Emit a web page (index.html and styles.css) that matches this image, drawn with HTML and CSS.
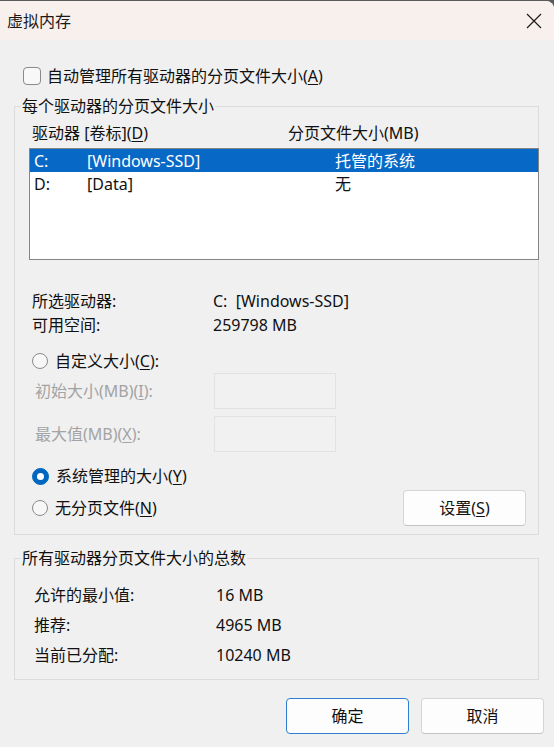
FILE: index.html
```html
<!DOCTYPE html>
<html lang="zh-CN">
<head>
<meta charset="utf-8">
<title>虚拟内存</title>
<link rel="stylesheet" href="styles.css">
</head>
<body>
<div class="window">
  <div class="titlebar">
    <span class="title">虚拟内存</span>
    <span class="close">
      <svg width="16" height="16" viewBox="0 0 16 16"><path d="M1 1 L15 15 M15 1 L1 15" stroke="#1b1b1b" stroke-width="1.2" fill="none"/></svg>
    </span>
  </div>
  <div class="content">
    <div class="check-row">
      <span class="checkbox"></span>
      <span>自动管理所有驱动器的分页文件大小(<u>A</u>)</span>
    </div>

    <fieldset class="group group-drive">
      <legend>每个驱动器的分页文件大小</legend>
      <div class="list-header">
        <span>驱动器 [卷标](<u>D</u>)</span>
        <span>分页文件大小(MB)</span>
      </div>
      <div class="listbox">
        <div class="list-row selected"><span>C:</span><span>[Windows-SSD]</span><span>托管的系统</span></div>
        <div class="list-row"><span>D:</span><span>[Data]</span><span>无</span></div>
      </div>
      <div class="info">
        <span>所选驱动器:</span><span>C:&nbsp; [Windows-SSD]</span>
        <span>可用空间:</span><span>259798 MB</span>
      </div>
      <div class="radio-row radio-custom">
        <span class="radio"></span>
        <span>自定义大小(<u>C</u>):</span>
      </div>
      <div class="field-row">
        <span class="disabled">初始大小(MB)(<u>I</u>):</span>
        <span class="input"></span>
      </div>
      <div class="field-row field-second">
        <span class="disabled">最大值(MB)(<u>X</u>):</span>
        <span class="input"></span>
      </div>
      <div class="radio-row radio-system">
        <span class="radio checked"></span>
        <span>系统管理的大小(<u>Y</u>)</span>
      </div>
      <div class="radio-row radio-none">
        <span class="radio"></span>
        <span>无分页文件(<u>N</u>)</span>
        <span class="button set-button">设置(<u>S</u>)</span>
      </div>
    </fieldset>

    <fieldset class="group group-total">
      <legend>所有驱动器分页文件大小的总数</legend>
      <div class="totals">
        <span>允许的最小值:</span><span>16 MB</span>
        <span>推荐:</span><span>4965 MB</span>
        <span>当前已分配:</span><span>10240 MB</span>
      </div>
    </fieldset>

    <div class="actions">
      <span class="button default">确定</span>
      <span class="button">取消</span>
    </div>
  </div>
</div>
</body>
</html>
```

FILE: styles.css
```css
html {
  background: #5a5a5a;
}
body {
  margin: 0;
  width: 554px;
  height: 747px;
  overflow: hidden;
  font-family: "Noto Sans", "Noto Sans CJK SC", sans-serif;
  font-size: 16px;
  color: #111;
}
u {
  text-decoration: underline;
  text-underline-offset: 2px;
  text-decoration-thickness: 1px;
}
.window {
  margin-top: 1px;
  height: 746px;
  background: #f0f0f0;
  border-top-right-radius: 8px;
  overflow: hidden;
}
.titlebar {
  height: 39px;
  background: #f7f0ed;
  display: flex;
  align-items: center;
  justify-content: space-between;
  padding: 0 12px 0 7px;
}
.title {
  line-height: 22px;
  font-size: 16px;
  color: #1a1a1a;
}
.close {
  display: flex;
  width: 16px;
  height: 16px;
}
.content {
  padding: 25px 10px 0 14px;
}
.check-row {
  display: flex;
  align-items: center;
  height: 22px;
  line-height: 22px;
  margin-left: 9px;
  gap: 6px;
}
.checkbox {
  box-sizing: border-box;
  width: 18px;
  height: 18px;
  border: 1px solid #8a8a8a;
  border-radius: 4px;
  background: #f8f8f8;
}
.group {
  box-sizing: border-box;
  width: 525px;
  margin: 8px 0 0 0;
  padding: 0 0 8px 0;
  border: 1px solid #dcdcdc;
  min-width: 0;
}
.group legend {
  margin-left: 6px;
  padding: 0 1px;
  line-height: 22px;
  font-size: 16px;
}
.list-header {
  display: grid;
  grid-template-columns: 256px auto;
  margin-top: 5px;
  padding-left: 17px;
  line-height: 22px;
}
.listbox {
  box-sizing: border-box;
  margin: 4px -1px 0 14px;
  height: 112px;
  border: 1px solid #858585;
  background: #ffffff;
}
.list-row {
  display: grid;
  grid-template-columns: 53px 248px auto;
  padding-left: 4px;
  height: 23px;
  line-height: 25px;
}
.list-row.selected {
  background: #0868c6;
  color: #ffffff;
}
.info {
  display: grid;
  grid-template-columns: 181px auto;
  margin-top: 29px;
  padding-left: 17px;
  line-height: 24px;
}
.radio-row {
  display: flex;
  align-items: center;
  height: 24px;
  line-height: 24px;
  padding-left: 17px;
  gap: 7px;
}
.radio-custom {
  margin-top: 12px;
}
.radio {
  box-sizing: border-box;
  width: 16px;
  height: 16px;
  border: 1px solid #8b8b8b;
  border-radius: 50%;
  background: #f7f7f7;
  display: flex;
  align-items: center;
  justify-content: center;
}
.radio.checked {
  width: 17px;
  height: 17px;
  border-color: #0067c0;
  background: #0067c0;
}
.radio.checked::after {
  content: "";
  width: 7px;
  height: 7px;
  border-radius: 50%;
  background: #ffffff;
}
.field-row {
  display: grid;
  grid-template-columns: 179px 122px;
  align-items: center;
  height: 36px;
  padding-left: 20px;
}
.field-second {
  margin-top: 7px;
}
.disabled {
  color: #a3a3a3;
  line-height: 24px;
}
.input {
  box-sizing: border-box;
  height: 36px;
  border: 1px solid #e2e2e2;
  background: #f1f1f1;
}
.radio-system {
  margin-top: 12px;
}
.radio-none {
  margin-top: 2px;
  height: 36px;
}
.button {
  box-sizing: border-box;
  display: flex;
  align-items: center;
  justify-content: center;
  width: 123px;
  height: 36px;
  background: #fdfdfd;
  border: 1px solid #d5d5d5;
  border-bottom-color: #c4c4c4;
  border-radius: 4px;
  line-height: 22px;
}
.set-button {
  margin-left: auto;
  margin-right: 12px;
}
.group-total {
  margin-top: 12px;
  padding-bottom: 9px;
}
.totals {
  display: grid;
  grid-template-columns: 182px auto;
  grid-auto-rows: 30px;
  align-items: center;
  margin-top: 11px;
  padding-left: 19px;
  line-height: 24px;
}
.actions {
  display: flex;
  justify-content: flex-end;
  gap: 12px;
  margin-top: 18px;
}
.button.default {
  border-color: #2f7fce;
}
```
